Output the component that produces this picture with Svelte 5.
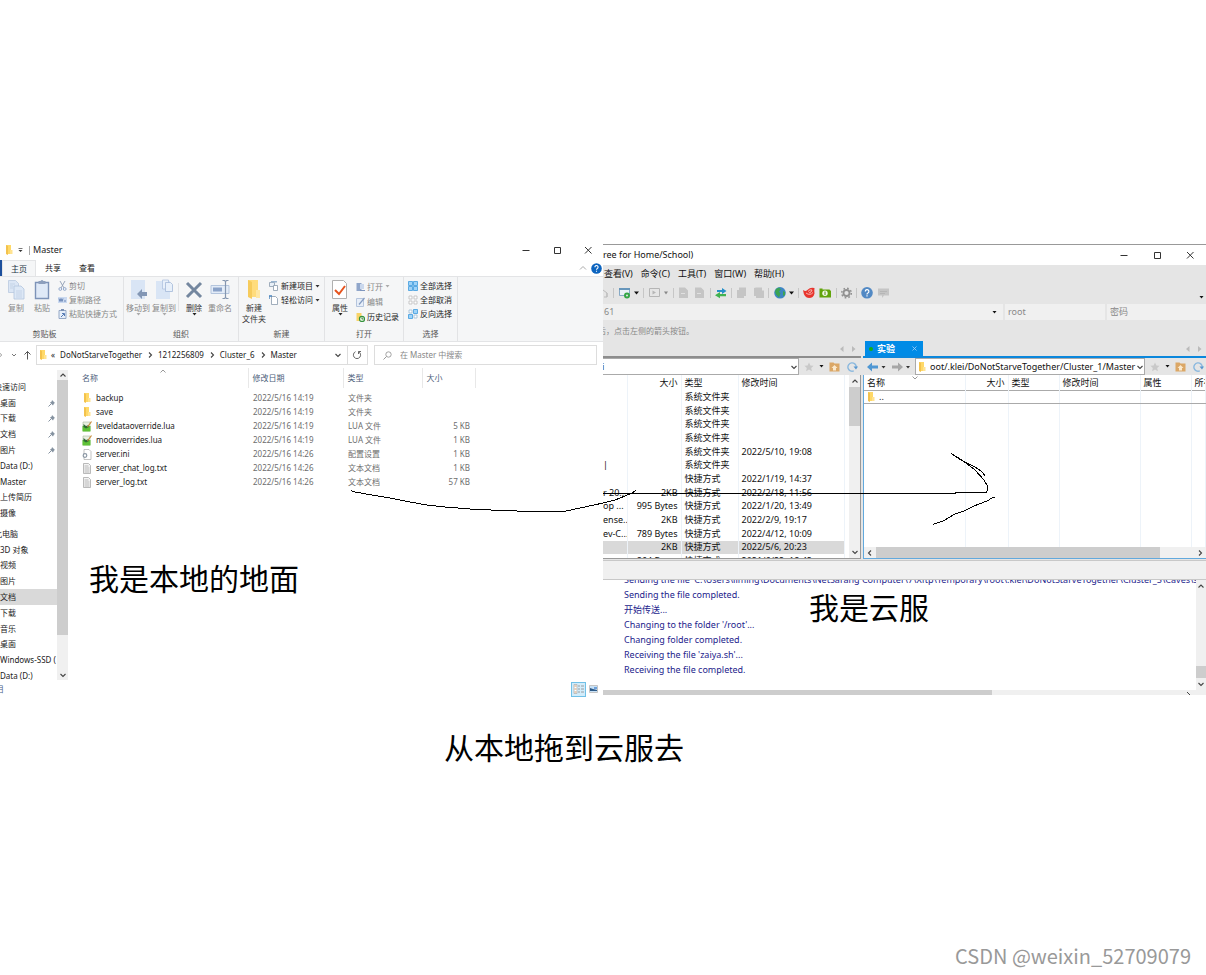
<script>
  const quick = ['快速访问', '桌面', '下载', '文档', '图片', 'Data (D:)', 'Master', '上传简历', '摄像'];
  const pc = ['此电脑', '3D 对象', '视频', '图片', '文档', '下载', '音乐', '桌面', 'Windows-SSD (', 'Data (D:)'];
  const files = [
    ['folder', 'backup', '2022/5/16 14:19', '文件夹', ''],
    ['folder', 'save', '2022/5/16 14:19', '文件夹', ''],
    ['lua', 'leveldataoverride.lua', '2022/5/16 14:19', 'LUA 文件', '5 KB'],
    ['lua', 'modoverrides.lua', '2022/5/16 14:19', 'LUA 文件', '1 KB'],
    ['ini', 'server.ini', '2022/5/16 14:26', '配置设置', '1 KB'],
    ['txt', 'server_chat_log.txt', '2022/5/16 14:26', '文本文档', '1 KB'],
    ['txt', 'server_log.txt', '2022/5/16 14:26', '文本文档', '57 KB']
  ];
  const local = [
    ['', '', '系统文件夹', ''],
    ['', '', '系统文件夹', ''],
    ['', '', '系统文件夹', ''],
    ['', '', '系统文件夹', ''],
    ['', '', '系统文件夹', '2022/5/10, 19:08'],
    ['|', '', '系统文件夹', ''],
    ['', '', '快捷方式', '2022/1/19, 14:37'],
    ['r 20...', '2KB', '快捷方式', '2022/2/18, 11:56'],
    ['op ...', '995 Bytes', '快捷方式', '2022/1/20, 13:49'],
    ['ense...', '2KB', '快捷方式', '2022/2/9, 19:17'],
    ['ev-C...', '789 Bytes', '快捷方式', '2022/4/12, 10:09'],
    ['', '2KB', '快捷方式', '2022/5/6, 20:23'],
    ['', '864 Bytes', '快捷方式', '2021/6/22, 18:42']
  ];
  const log = [
    "Sending the file 'C:\\Users\\liming\\Documents\\NetSarang Computer\\7\\Xftp\\Temporary\\root\\.klei\\DoNotStarveTogether\\Cluster_5\\Caves\\se",
    'Sending the file completed.',
    '开始传送...',
    "Changing to the folder '/root'...",
    'Changing folder completed.',
    "Receiving the file 'zaiya.sh'...",
    'Receiving the file completed.'
  ];
  const crumbs = ['DoNotStarveTogether', '1212256809', 'Cluster_6', 'Master'];
  const menus = ['查看(V)', '命令(C)', '工具(T)', '窗口(W)', '帮助(H)'];
</script>

{#snippet folder()}
  <svg width="8" height="10" viewBox="0 0 8 10"><path d="M1 0h5v9H1z" fill="#ffd968" /><path d="M1 0l2 1v9l-2-1z" fill="#f3c24d" /><path d="M5 5h2.500v4H5z" fill="#ffe391" /></svg>
{/snippet}
{#snippet chev(dir)}
  <svg width="8" height="8" viewBox="0 0 8 8" fill="none" stroke="#444" stroke-width="1.100">
    <path d={dir === 'up' ? 'M1.500 5.500L4 3l2.500 2.500' : dir === 'down' ? 'M1.500 3L4 5.500 6.500 3' : dir === 'left' ? 'M5 1.500L2.500 4 5 6.500' : 'M3 1.500L5.500 4 3 6.500'} />
  </svg>
{/snippet}
{#snippet tri(color)}
  <svg width="5" height="3" viewBox="0 0 5 3"><path d="M.500 0h4L2.500 2.500z" fill={color} /></svg>
{/snippet}
{#snippet fileIcon(kind)}
  {#if kind === 'folder'}
    <svg width="10" height="10" viewBox="-1 0 10 10"><path d="M1 0h5v9H1z" fill="#ffd968" /><path d="M1 0l2 1v9l-2-1z" fill="#f3c24d" /><path d="M5 5h2.500v4H5z" fill="#ffe391" /></svg>
  {:else if kind === 'lua'}
    <svg width="10" height="11" viewBox="0 0 10 11"><path d="M1 1h7v9H1z" fill="#e8efe2" stroke="#aab8a0" stroke-width=".6" /><path d="M.500 5h8v5.500h-8z" fill="#5fc236" /><path d="M1.500 3l2.500 2 3-1v2L4 7.500 1.500 6z" fill="#2d6a35" /><path d="M9.500 .500L5.500 6" stroke="#c78a3c" stroke-width="1.200" /></svg>
  {:else if kind === 'ini'}
    <svg width="10" height="11" viewBox="0 0 10 11"><path d="M2 .500h5l2 2v8H2z" fill="#fff" stroke="#aaa" stroke-width=".7" /><circle cx="3" cy="6.500" r="1.800" fill="#fff" stroke="#8b97a4" stroke-width="1.200" /></svg>
  {:else}
    <svg width="10" height="11" viewBox="0 0 10 11"><path d="M1.500 .500h5l2 2v8h-7z" fill="#f4f4f4" stroke="#aaa" stroke-width=".8" /><path d="M2.500 3h4M2.500 5h5M2.500 7h5M2.500 9h5" stroke="#aaa" stroke-width=".8" /></svg>
  {/if}
{/snippet}
{#snippet winControls(gap)}
  <div class="controls" style:gap="{gap}px">
    <button aria-label="最小化"><svg width="8" height="8" viewBox="0 0 8 8"><path d="M.500 4.500h7" stroke="#333" /></svg></button>
    <button aria-label="最大化"><svg width="8" height="8" viewBox="0 0 8 8"><path d="M1.500 1.500h6v6h-6z" fill="none" stroke="#333" /></svg></button>
    <button aria-label="关闭"><svg width="8" height="8" viewBox="0 0 8 8"><path d="M1 1l6.500 6.500M7.500 1L1 7.500" stroke="#333" /></svg></button>
  </div>
{/snippet}
{#snippet pathTools()}
  <button aria-label="收藏"><svg width="10" height="10" viewBox="0 0 10 10"><path d="M5 .500l1.400 3 3.200.3-2.400 2.200.7 3.200L5 7.600 2.100 9.200l.7-3.200L.400 3.800l3.200-.3z" fill="#c9c9c9" /></svg></button>
  <button aria-label="收藏列表">{@render tri('#111')}</button>
  <button aria-label="上级"><svg width="11" height="10" viewBox="0 0 11 10"><path d="M.500 .500h4l1 1h5v8H.500z" fill="#dba766" /><path d="M5.500 3l3 3H7v2.500H4V6H2.500z" fill="#fbe9cc" /></svg></button>
  <button class="again" aria-label="刷新"><svg width="11" height="10" viewBox="0 0 11 10"><path d="M6.800 8.900A4.200 4.200 0 1 1 9.300 5" fill="none" stroke="#8ab8de" stroke-width="1.400" /><path d="M6.500 4.500H11L9 7.500z" fill="#5796cf" /></svg></button>
{/snippet}

<main>
  <div class="desk">
    <section class="explorer">
      <header class="title">
        {@render folder()}
        <svg class="qat" width="5" height="6" viewBox="0 0 5 6"><path d="M.500 1.500h4" stroke="#555" stroke-width=".8" /><path d="M.500 3h4L2.500 5z" fill="#333" /></svg>
        <span class="bar"></span><span>Master</span>
        {@render winControls(23)}
      </header>
      <nav class="tabs">
        <span class="filetab"></span>
        <button class="on">主页</button><button>共享</button><button>查看</button>
        <span class="grow"></span>
        <svg width="8" height="8" viewBox="0 0 8 8"><path d="M1 5.500l3-3 3 3" fill="none" stroke="#aaa" /></svg>
        <button class="help" aria-label="帮助"><svg width="11" height="11" viewBox="0 0 11 11"><circle cx="5.500" cy="5.500" r="5.300" fill="#0c64bf" /><path d="M3.900 4.200a1.600 1.600 0 1 1 2.500 1.300q-.9.500-.9 1.300M5.500 7.700v1" fill="none" stroke="#fff" stroke-width="1.100" /></svg></button>
      </nav>
      <div class="ribbon">
        <div class="group g1">
          <div class="tools">
            <span class="edge"></span>
            <button class="big dim">
              <svg width="18" height="21" viewBox="0 0 18 21"><path d="M1.500 1.500h7l3 3v9h-10z" fill="#dbe6f5" stroke="#b9c9e0" stroke-width=".8" /><path d="M7 7h7l3 3v10H7z" fill="#dde8f6" stroke="#b3c5de" stroke-width=".8" /><path d="M3 5h5M3 7h3M3 9h3M9 12h6M9 14h6M9 16h6M9 18h6" stroke="#bccce3" stroke-width=".7" /></svg>
              复制</button>
            <button class="big dim">
              <svg width="18" height="21" viewBox="0 0 18 21"><path d="M2.500 3.500h13v16h-13z" fill="#dfe9f7" stroke="#7d93b8" stroke-width="1.400" /><path d="M5.500 2h2q1.500-2 3 0h2v3h-7z" fill="#8d9fbd" /></svg>
              粘贴</button>
            <div class="stack">
              <button class="dim"><svg width="9" height="10" viewBox="0 0 9 10"><path d="M2 0l4 7M7 0L3 7" stroke="#8f9db3" stroke-width=".9" /><circle cx="2.300" cy="8" r="1.400" fill="none" stroke="#8ba3c8" stroke-width=".9" /><circle cx="6.700" cy="8" r="1.400" fill="none" stroke="#8ba3c8" stroke-width=".9" /></svg>剪切</button>
              <button class="dim"><svg width="9" height="6" viewBox="0 0 9 6"><path d="M0 0h9v6H0z" fill="#cbdaf0" /><path d="M1 1.500l1 3 1-3 1 3 1-3M6 4h2" fill="none" stroke="#5674a8" stroke-width=".8" /></svg>复制路径</button>
              <button class="dim"><svg width="9" height="10" viewBox="0 0 9 10"><path d="M1 1.500h7v8H1z" fill="#e6eef9" stroke="#8b9fbf" stroke-width=".9" /><path d="M3 0h3v2H3z" fill="#7b91b5" /><path d="M3 8l3-3M4 4.500h2.500V7" stroke="#456dad" fill="none" stroke-width=".9" /></svg>粘贴快捷方式</button>
            </div>
          </div>
          <footer>剪贴板</footer>
        </div>
        <div class="group g2">
          <div class="tools">
            <button class="big dim"><svg width="20" height="21" viewBox="0 0 20 21"><path d="M3 1h14v19H3z" fill="#d9e5f5" /><path d="M9 15l5-5v3h5v4h-5v3z" fill="#8397b5" /></svg>移动到{@render tri('#aaa')}</button>
            <button class="big dim"><svg width="20" height="21" viewBox="0 0 20 21"><path d="M2 2h14v18H2z" fill="#d9e5f5" /><path d="M8.500 1h6v9h-6z" fill="#e8f0fa" stroke="#b0c3df" stroke-width=".8" /><path d="M11.500 3.500h5l2 2v7h-7z" fill="#e8f0fa" stroke="#a3b9d8" stroke-width=".8" /></svg>复制到{@render tri('#aaa')}</button>
            <span class="sep"></span>
            <button class="big"><svg width="18" height="21" viewBox="0 0 18 21"><path d="M2 4l14 14M16 4L2 18" stroke="#74879f" stroke-width="3" /></svg>删除{@render tri('#222')}</button>
            <button class="big dim"><svg width="20" height="21" viewBox="0 0 20 21"><path d="M1 6.500h18v8H1z" fill="#e3ecf8" stroke="#b4c5dd" /><path d="M3 8.500h9v4H3z" fill="#8aa2c8" /><path d="M12.500 1.500h2l1 1 1-1h2M15.500 2.500v16M12.500 19.500h2l1-1 1 1h2" fill="none" stroke="#8496b0" stroke-width="1.200" /></svg>重命名</button>
          </div>
          <footer>组织</footer>
        </div>
        <div class="group g3">
          <div class="tools">
            <button class="big"><svg width="18" height="21" viewBox="0 0 18 21"><path d="M3 1h10v17H3z" fill="#ffdc7c" /><path d="M3 1l4 2v17l-4-2z" fill="#f6cb5c" /><path d="M11 11h4v8h-4z" fill="#ffe7a4" /></svg>新建<br />文件夹</button>
            <div class="stack">
              <button><svg width="10" height="10" viewBox="0 0 10 10"><path d="M.500 1.500h5v4h-5z" fill="#e8f0f8" stroke="#8a9aac" stroke-width=".8" /><path d="M4.500 4.500h4v5h-4z" fill="#fff" stroke="#8a9aac" stroke-width=".8" /><path d="M2 0h6v1.500H2z" fill="#99b5d0" /></svg>新建项目{@render tri('#333')}</button>
              <button><svg width="10" height="10" viewBox="0 0 10 10"><path d="M2.500 1.500h4l2 2v6h-6z" fill="#fff" stroke="#8a9aac" stroke-width=".8" /><path d="M0 4V1h3" fill="none" stroke="#4883bd" stroke-width="1.400" /></svg>轻松访问{@render tri('#333')}</button>
            </div>
          </div>
          <footer>新建</footer>
        </div>
        <div class="group g4">
          <div class="tools">
            <button class="big"><svg width="18" height="21" viewBox="0 0 18 21"><path d="M1.500 1.500h11l3 3v15h-14z" fill="#fff" stroke="#b0b0b0" /><path d="M4 11l4 4 6-8" fill="none" stroke="#e6531d" stroke-width="2" /></svg>属性{@render tri('#222')}</button>
            <div class="stack loose">
              <button class="dim"><svg width="9" height="10" viewBox="0 0 9 10"><path d="M.500 1h5v8h-5z" fill="#90a6ca" /><path d="M4 2h4v5H4z" fill="#cad8ed" /><path d="M4 8.500h5" stroke="#7e96be" /></svg>打开{@render tri('#aaa')}</button>
              <button class="dim"><svg width="9" height="10" viewBox="0 0 9 10"><path d="M.500 1.500h7v8h-7z" fill="#e7eef8" stroke="#b5c5dd" /><path d="M8.500 1L3 7.500" stroke="#849cc2" stroke-width="1.200" /></svg>编辑</button>
              <button><svg width="9" height="10" viewBox="0 0 9 10"><path d="M.500 1h5v8h-5z" fill="#f8d468" /><circle cx="6" cy="7" r="2.600" fill="#dff1d9" stroke="#35913d" stroke-width="1.100" /><path d="M6 5.500V7h1.500" stroke="#286d30" fill="none" stroke-width=".8" /></svg>历史记录</button>
            </div>
          </div>
          <footer>打开</footer>
        </div>
        <div class="group g5">
          <div class="tools">
            <div class="stack">
              <button><svg width="10" height="10" viewBox="0 0 10 10"><path d="M.500 .500h4v4h-4zM5.500 .500h4v4h-4zM.500 5.500h4v4h-4zM5.500 5.500h4v4h-4z" fill="#9fd3f8" stroke="#3d9add" stroke-width=".8" /></svg>全部选择</button>
              <button><svg width="10" height="10" viewBox="0 0 10 10"><path d="M1 1h3v3H1zM6 1h3v3H6zM1 6h3v3H1zM6 6h3v3H6z" fill="#fff" stroke="#bbb" stroke-width=".8" /></svg>全部取消</button>
              <button><svg width="10" height="10" viewBox="0 0 10 10"><path d="M5.500 .500h4v4h-4zM.500 5.500h4v4h-4z" fill="#9fd3f8" stroke="#3d9add" stroke-width=".8" /><path d="M1 1h3v3H1zM6 6h3v3H6z" fill="#fff" stroke="#9bbad4" stroke-width=".8" /></svg>反向选择</button>
            </div>
          </div>
          <footer>选择</footer>
        </div>
      </div>
      <div class="address">
        <svg width="36" height="10" viewBox="0 0 36 10" fill="none" stroke="#777"><path d="M-1 5h3M0 3l2 2-2 2" stroke="#bbb" /><path d="M12 4l2 2 2-2" /><path d="M27.500 9.500V1.500M24.500 4.500l3-3 3 3" stroke="#555" /></svg>
        <div class="crumbs">
          {@render folder()}<span class="lead">«</span>
          {#each crumbs as c, i}
            {#if i}{@render chev('right')}{/if}<a href="#path">{c}</a>
          {/each}
          <span class="grow"></span>{@render chev('down')}
          <button class="reload" aria-label="刷新"><svg width="10" height="10" viewBox="0 0 10 10"><path d="M6.500 1.700a3.600 3.600 0 1 1-3 0M6.500 4V1.500H9" fill="none" stroke="#666" /></svg></button>
        </div>
        <label class="search">
          <svg width="9" height="9" viewBox="0 0 9 9"><circle cx="5.500" cy="3.500" r="2.700" fill="none" stroke="#999" stroke-width=".9" /><path d="M3.500 5.500L.500 8.500" stroke="#999" /></svg>
          <input aria-label="搜索" placeholder="在 Master 中搜索" />
        </label>
      </div>
      <div class="body">
        <aside>
          <ul class="quick">
            {#each quick as q, i}
              <li class:head={i === 0}>{q}{#if i > 0 && i < 5}<svg width="8" height="8" viewBox="0 0 8 8"><path d="M4 1l3 3-1 .5-1 2-3-3 1.700-1z" fill="#8592a0" /><path d="M3.500 4.500L.500 7.500" stroke="#8592a0" /></svg>{/if}</li>
            {/each}
          </ul>
          <ul class="pc">
            {#each pc as p, i}
              <li class:head={i === 0} class:sel={i === 4}>{p}</li>
            {/each}
          </ul>
        </aside>
        <div class="vbar left">{@render chev('up')}<i></i>{@render chev('down')}</div>
        <div class="files">
          <span class="sort"><svg width="8" height="6" viewBox="0 0 8 6"><path d="M1.500 4.500L4 2l2.500 2.500" fill="none" stroke="#999" /></svg></span>
          <table>
            <colgroup><col class="c1" /><col class="c2" /><col class="c3" /><col class="c4" /><col /></colgroup>
            <thead><tr><th>名称</th><th>修改日期</th><th>类型</th><th>大小</th><th></th></tr></thead>
            <tbody>
              {#each files as f}
                <tr><td><span class="name">{@render fileIcon(f[0])}{f[1]}</span></td><td>{f[2]}</td><td>{f[3]}</td><td class="r">{f[4]}</td><td></td></tr>
              {/each}
            </tbody>
          </table>
        </div>
      </div>
      <footer class="status">
        <span>目</span>
        <button class="view on" aria-label="详细信息"><svg width="12" height="12" viewBox="0 0 12 12"><path d="M1 1.500h3v9H1z" fill="#fff" stroke="#aaa" stroke-width=".7" /><path d="M1.500 3h2M1.500 6h2M1.500 9h2" stroke="#c8864c" stroke-width=".8" /><path d="M5 3h2M8 3h3M5 6h2M8 6h3M5 9h2M8 9h3" stroke="#8b8b8b" stroke-width=".8" /></svg></button>
        <button class="view" aria-label="大图标"><svg width="9" height="8" viewBox="0 0 9 8"><path d="M.500 .500h8v7h-8z" fill="#c9e1f5" stroke="#c5c5c5" /><path d="M1 3l3 1 4 1v1H1z" fill="#2d5a88" /><path d="M5 2h3v2H5z" fill="#6da1dc" /></svg></button>
      </footer>
    </section>

    <section class="xftp">
      <header class="title2"><span>ree for Home/School)</span>{@render winControls(25)}</header>
      <nav class="menu">{#each menus as m}<button>{m}</button>{/each}</nav>
      <div class="toolbar">
        <svg width="300" height="14" viewBox="603 286 300 14">
          <path d="M603 290l4 3v4h-3M607 293v4" fill="none" stroke="#bbb" />
          <g stroke="#c6c6c6"><path d="M613.500 288v10M643.500 288v10M673.500 288v10M710.500 288v10M731.500 288v10M768.500 288v10M798.500 288v10M836.500 288v10M856.500 288v10" /></g>
          <path d="M619.500 288.500h10v7h-10z" fill="#eaf1f6" stroke="#7ba2c0" stroke-width=".9" /><path d="M619 288h11v2h-11z" fill="#6796bb" /><circle cx="627" cy="295.500" r="2" fill="#e5e5e5" stroke="#35a646" stroke-width="2" />
          <path d="M634 291.500h5l-2.500 3z" fill="#111" />
          <path d="M649.500 288.500h10v8h-10z" fill="none" stroke="#b5b5b5" /><path d="M652.500 290.500v4l3.500-2z" fill="#b5b5b5" /><path d="M664 291.500h4l-2 3z" fill="#888" />
          <g fill="#c5c5c5"><path d="M679 287.500h6l3 3v7.500h-9zM695 287.500h6l3 3v7.500h-9zM739 287.500h7v8.500h-2v2h-7v-8h2zM756 287.500h6v3h2v7.500h-8v-2h-2v-8z" /></g><path d="M681 293.500h4M697 293.500h4" stroke="#e0e0e0" />
          <path d="M717 290h5v-2l4.500 3-4.500 3v-2h-5z" fill="#258fca" /><path d="M726 294h-6v-2l-5 3.200 5 3v-2h6z" fill="#42b250" />
          <circle cx="780" cy="292.800" r="5.800" fill="#3d86c4" /><path d="M776 289l3-1.500 2 2-2 2 1.500 2-1.500 4-3-3-1-3zM783 291l2 1v3l-2 1z" fill="#3ba453" />
          <path d="M789 291.500h5l-2.500 3z" fill="#111" />
          <path d="M803 290q3 2 5-.5 2-2.500 6.500-1.500-.5 4 0 5.500-1 4.500-5.500 4.500-5 0-6-8z" fill="#e8352e" /><path d="M806 293q4 3 7-.5M808 291.500q2-2.500 4-1.500-.5 2.500-3 3" fill="none" stroke="#f8d0cc" stroke-width=".8" />
          <path d="M819.500 288.500h3v1h7l1.500 1.500v6.500h-11.500z" fill="#62a40b" /><circle cx="825" cy="293.300" r="2.700" fill="#f2f8e8" /><path d="M825 291.500v3.500" stroke="#538b0a" />
          <circle cx="846.500" cy="293" r="3" fill="none" stroke="#919191" stroke-width="1.800" /><circle cx="846.500" cy="293" r="4.800" fill="none" stroke="#919191" stroke-width="1.500" stroke-dasharray="1.700 2.070" />
          <circle cx="867" cy="292.800" r="5.800" fill="#5289c4" /><path d="M865.300 291.500a1.800 1.800 0 1 1 2.600 1.500q-.9.400-.9 1.400M867 295.200v1.200" fill="none" stroke="#fff" stroke-width="1.200" />
          <path d="M878 288.500h11v7h-5l-2 2.500v-2.500h-4z" fill="#c5c5c5" /><path d="M880 291.500h7M880 293.500h5" stroke="#b2b2b2" stroke-width=".8" />
        </svg>
        <span class="more">{@render tri('#111')}</span>
      </div>
      <div class="login">
        <label class="host"><input aria-label="主机" value="61" />{@render tri('#111')}</label>
        <input class="user" aria-label="用户" placeholder="root" />
        <input class="pass" aria-label="密码" placeholder="密码" />
      </div>
      <p class="hint">后，点击左侧的箭头按钮。</p>
      <div class="panes">
        <div class="pane local">
          <div class="ptabs"><span class="grow"></span><svg width="18" height="8" viewBox="0 0 18 8" fill="#bbb"><path d="M4.500 1v6L1 4zM13 1v6l3.500-3z" /></svg></div>
          <div class="ppath"><div class="field"><span class="cut">i</span>{@render chev('down')}</div>{@render pathTools()}</div>
          <div class="plist">
            <table>
              <colgroup><col class="l1" /><col class="l2" /><col class="l3" /><col /></colgroup>
              <thead><tr><th></th><th class="r">大小</th><th>类型</th><th>修改时间</th></tr></thead>
              <tbody>
                {#each local as r, i}
                  <tr class:sel={i === 11}><td>{r[0]}</td><td class="r">{r[1]}</td><td>{r[2]}</td><td>{r[3]}</td></tr>
                {/each}
              </tbody>
            </table>
            <div class="vbar right">{@render chev('up')}<i></i>{@render chev('down')}</div>
          </div>
        </div>
        <div class="pane remote">
          <div class="ptabs">
            <button class="tab"><i></i>实验<svg width="5" height="5" viewBox="0 0 5 5"><path d="M.500 .500l4 4M4.500 .500l-4 4" stroke="#a9d3f6" stroke-width=".8" /></svg></button>
            <span class="grow"></span><svg width="18" height="8" viewBox="0 0 18 8" fill="#bbb"><path d="M4.500 1v6L1 4zM13 1v6l3.500-3z" /></svg>
          </div>
          <div class="ppath">
            <svg width="46" height="10" viewBox="-2 0 46 10"><path d="M1 5l5-4.500v3h6v3H6v3z" fill="#4f97d3" /><path d="M15.500 4h4l-2 2.500zM40 4h4l-2 2.500z" fill="#333" /><path d="M37 5l-5-4.500v3h-6v3h6v3z" fill="#a6a6a6" /></svg>
            <div class="field">{@render folder()}<span class="url">oot/.klei/DoNotStarveTogether/Cluster_1/Master</span>{@render chev('down')}</div>
            {@render pathTools()}
          </div>
          <div class="rlist">
            <span class="sort2"><svg width="8" height="6" viewBox="0 0 8 6"><path d="M1.500 1.500L4 4l2.500-2.500" fill="none" stroke="#999" /></svg></span>
            <table>
              <colgroup><col class="r1" /><col class="r2" /><col class="r3" /><col class="r4" /><col class="r5" /><col /></colgroup>
              <thead><tr><th>名称</th><th class="r">大小</th><th>类型</th><th>修改时间</th><th>属性</th><th>所有</th></tr></thead>
              <tbody>
                <tr class="up"><td><span class="name">{@render folder()}..</span></td><td></td><td></td><td></td><td></td><td></td></tr>
                <tr><td></td><td></td><td></td><td></td><td></td><td></td></tr>
              </tbody>
            </table>
          </div>
          <div class="hbar">{@render chev('left')}<i></i><span class="grow"></span>{@render chev('right')}</div>
        </div>
      </div>
      <div class="strip"></div>
      <div class="logs">
        <div class="lines"><div class="rows">{#each log as l}<p>{l}</p>{/each}</div></div>
        <div class="vbar end">{@render chev('up')}<i></i>{@render chev('down')}</div>
      </div>
      <div class="hscroll"><i></i><svg width="6" height="5" viewBox="0 0 6 5"><path d="M1 2l3 3" stroke="#444" /></svg></div>
    </section>
  </div>

  <svg class="ink" viewBox="0 0 1206 975" preserveAspectRatio="none" fill="none" stroke="#000" stroke-width="1" shape-rendering="crispEdges">
    <path d="M351 490.500L355 492 372 495 390 498 410 502 427 505 445 507 470 509 491 510 530 511.500H564L580 508 594 505 603 503 615 500 625 496 632 493 636 490.500" />
    <path d="M603 493.500H955V492.500H986L987.500 490V486L984 480 975 470 962 460 951 453.500 961 460 975 467 981 471 985 475.500" />
    <path d="M933 524.500L943 521 955 514 964 511 974 506 987 501 992 498 995.500 497.500" />
  </svg>
  <p class="note n1">我是本地的地面</p>
  <p class="note n2">我是云服</p>
  <p class="note n3">从本地拖到云服去</p>
  <p class="mark">CSDN @weixin_52709079</p>
</main>

<style>
  :global(body) { margin: 0; background: #fff; }
  main { position: relative; min-height: 975px; overflow: hidden; box-sizing: border-box; padding-top: 240px; color: #222; font: 8px/12px "Noto Sans", "Noto Sans CJK SC", sans-serif; }
  main :is(p, ul) { margin: 0; padding: 0; list-style: none; }
  button, input { font: inherit; color: inherit; background: none; border: 0; padding: 0; margin: 0; min-width: 0; outline: 0; }
  button { display: flex; align-items: center; white-space: nowrap; }
  a { color: inherit; text-decoration: none; }
  svg { display: block; flex: none; }
  .grow { flex: 1; }
  .r { text-align: right !important; }
  table { border-collapse: collapse; table-layout: fixed; width: 100%; }
  th, td { padding: 0; text-align: left; font-weight: 400; white-space: nowrap; overflow: hidden; }
  .desk { display: grid; grid-template-columns: 1fr 1fr; align-items: start; }
  section { min-width: 0; overflow: hidden; }

  .title { display: flex; align-items: center; height: 20px; padding-left: 5px; padding-right: 11px; }
  .title span { font-size: 9px; }
  .qat { margin-left: 5px; }
  .bar { width: 1px; height: 9px; background: #aaa; margin: 0 3px 0 6px; }
  .controls { display: flex; margin-left: auto; }
  .tabs { display: flex; align-items: center; height: 16px; }
  .filetab { width: 2px; align-self: stretch; background: #1c4f9c; }
  .tabs button { height: 16px; width: 34px; justify-content: center; }
  .tabs .on { background: #f5f6f7; border: 1px solid #e3e4e6; border-bottom: 0; color: #234; box-sizing: border-box; }
  .tabs button.help { width: 13px; margin-left: 3px; }
  .ribbon { display: flex; height: 64px; background: #f5f6f7; border: solid #e3e4e6; border-width: 1px 0; }
  .group { display: flex; flex-direction: column; box-sizing: border-box; border-right: 1px solid #e2e3e5; }
  .g1 { width: 124px; } .g2 { width: 115px; } .g3 { width: 86px; } .g4 { width: 79px; } .g5 { width: 54px; }
  .group footer { text-align: center; line-height: 14px; color: #555; padding-right: 34px; }
  .g2 footer, .g3 footer, .g4 footer, .g5 footer { padding: 0; }
  .tools { flex: 1; display: flex; align-items: flex-start; padding-top: 2px; }
  .edge { width: 3px; }
  .big { flex-direction: column; width: 26px; line-height: 11px; text-align: center; color: #333; }
  .big svg { margin-bottom: 2px; }
  .dim { color: #888; }
  .g3 .big, .g4 .big { width: 30px; }
  .stack { display: flex; flex-direction: column; padding-left: 3px; }
  .g3 .stack { padding-left: 0; } .g4 .stack { padding-left: 1px; } .g5 .stack { padding-left: 4px; }
  .stack button { height: 14px; gap: 2px; }
  .stack.loose button { height: 15px; }
  .sep { width: 1px; height: 28px; background: #e2e3e5; margin: 4px 2px 4px 1px; }
  .g2 .tools { padding-left: 1px; }
  .address { display: flex; align-items: center; height: 26px; padding-right: 6px; }
  .crumbs { display: flex; align-items: center; flex: 340; height: 20px; box-sizing: border-box; border: 1px solid #ddd; padding-left: 2px; }
  .crumbs a { margin: 0 4px; }
  .lead { margin: 0 1px 0 4px; }
  .reload { width: 20px; height: 18px; justify-content: center; border-left: 1px solid #ddd; margin-left: 5px; }
  .search { display: flex; align-items: center; gap: 8px; flex: 221; height: 20px; box-sizing: border-box; border: 1px solid #ddd; margin-left: 6px; padding-left: 8px; }
  .search input { flex: 1; }
  .search input::placeholder, .login input::placeholder { color: #888; opacity: 1; }
  .body { display: flex; height: 313px; }
  aside { width: 57px; overflow: hidden; padding-top: 11px; box-sizing: border-box; }
  aside ul { display: grid; grid-auto-rows: 1fr; }
  .quick { height: 142px; }
  .pc { height: 158px; margin-top: 5px !important; }
  aside li { display: flex; align-items: center; justify-content: space-between; white-space: nowrap; padding-right: 1px; }
  aside li.head { text-indent: -6px; }
  aside li.sel { background: #d9d9d9; }
  .vbar { display: flex; flex-direction: column; align-items: center; background: #f0f0f0; flex: none; }
  .vbar i { width: 100%; background: #cdcdcd; }
  .vbar.left { width: 11px; margin: 2px 0 1px; padding: 1px 0; justify-content: space-between; }
  .vbar.left i { flex: 0 0 255px; margin-bottom: auto; margin-top: 1px; }
  .files { position: relative; flex: 1; min-width: 0; color: #6d6d6d; }
  .files table { margin-left: 14px; width: calc(100% - 14px); }
  .c1 { width: 166px; } .c2 { width: 95px; } .c3 { width: 79px; } .c4 { width: 53px; }
  .files th { height: 20px; color: #4c607a; }
  .files th + th { border-left: 1px solid #e8e8e8; padding-left: 4px; }
  .files tbody td { height: 14px; line-height: 14px; }
  .files tbody td:nth-child(n + 2) { padding-left: 5px; }
  .files tbody tr:first-child td { padding-top: 3px; }
  .files .r { padding-right: 5px; }
  .sort { position: absolute; left: 91px; top: 0; }
  .name { display: flex; align-items: center; gap: 4px; color: #222; }
  .status { display: flex; align-items: center; height: 16px; color: #47618a; }
  .status span { margin-left: -4px; margin-right: auto; }
  .view { width: 13px; height: 14px; justify-content: center; margin-right: 3px; }
  .view.on { width: 15px; height: 15px; box-sizing: border-box; background: #d2ecfa; border: 1px solid #70c0e7; margin-right: 1px; }

  .xftp { display: flex; flex-direction: column; margin-top: 4px; border-top: 1px solid #999; background: #e5e5e5; font-size: 9px; color: #111; }
  .title2 { display: flex; align-items: center; height: 20px; background: #fff; padding-right: 12px; }
  .menu { display: flex; gap: 8px; height: 18px; padding-left: 1px; }
  .toolbar { display: flex; align-items: flex-start; justify-content: space-between; height: 21px; box-sizing: border-box; padding-top: 3px; }
  .more { padding: 10px 2px 0 0; }
  .login { display: flex; height: 16px; color: #888; margin-bottom: 1px; gap: 2px; }
  .login > * { background: #f0f0f0; box-sizing: border-box; }
  .host { flex: 394; display: flex; align-items: center; padding-right: 6px; }
  .host input { flex: 1; padding-left: 1px; }
  .user { flex: 97; width: 0; padding-left: 3px; } .pass { flex: 96; width: 0; padding-left: 3px; }
  .hint { color: #888; height: 20px; line-height: 20px; margin-left: -5px !important; font-size: 8px; }
  .panes { display: grid; grid-template-columns: 258fr 343fr; gap: 2px; }
  .pane { min-width: 0; display: flex; flex-direction: column; height: 218px; }
  .ptabs { display: flex; align-items: center; flex: 0 0 15px; padding-right: 4px; border-bottom: 2px solid #8d8d8d; }
  .remote .ptabs { border-color: #0b87dc; padding-right: 3px; }
  .tab { align-self: stretch; background: #008be6; color: #fff; font-weight: 600; width: 58px; margin-left: 2px; }
  .tab i { width: 4px; height: 4px; border-radius: 4px; background: #12b012; margin: 0 4px 0 4px; }
  .tab svg { margin-left: auto; margin-right: 6px; }
  .ppath { display: flex; align-items: center; flex: 0 0 17px; gap: 5px; }
  .again { margin-left: 2px; }
  .field { display: flex; align-items: center; align-self: stretch; flex: 1; background: #fff; border: 1px solid #aaa; border-left: 0; min-width: 0; box-sizing: border-box; }
  .cut { flex: 1; color: #345; margin-left: -1px; }
  .local .ppath { padding-right: 3px; }
  .remote .ppath { padding-left: 1px; padding-right: 2px; }
  .remote .field { border-left: 1px solid #aaa; padding-left: 2px; }
  .url { flex: 1; margin-left: 4px; overflow: hidden; white-space: nowrap; }
  .plist { display: flex; flex: 1; min-height: 0; overflow: hidden; background: #fff; border-bottom: 1px solid #999; border-right: 1px solid #999; }
  .plist table { flex: 1; height: 193px; margin-right: 4px; }
  .l1 { width: 24px; } .l2 { width: 54px; } .l3 { width: 57px; }
  .plist th { height: 15px; }
  .plist td { line-height: 12px; }
  .plist :is(th, td) { border-right: 1px solid #edf3f9; padding-left: 3px; }
  .plist :is(th, td):first-child, .plist .r { padding-left: 0; }
  .plist .r { padding-right: 3px; }
  .plist .sel { background: #d9d9d9; }
  .vbar.right { width: 11px; padding: 2px 0; justify-content: space-between; }
  .vbar.right i { flex: 0 0 39px; margin-bottom: auto; margin-top: 2px; }
  .remote .rlist, .remote .hbar { border-left: 1px solid #62a9dd; }
  .rlist { position: relative; flex: 1; min-height: 0; background: #fff; display: flex; }
  .rlist table { height: 100%; }
  .r1 { width: 101px; } .r2 { width: 43px; } .r3 { width: 51px; } .r4 { width: 81px; } .r5 { width: 51px; }
  .rlist th { height: 15px; }
  .rlist :is(th, td) { border-right: 1px solid #edf3f9; padding-left: 3px; }
  .rlist .r { padding-right: 3px; }
  .rlist .up td { height: 11px; border-top: 1px solid #aaa; border-bottom: 1px solid #aaa; }
  .sort2 { position: absolute; left: 47px; top: 0; }
  .hbar { display: flex; align-items: center; height: 11px; background: #f0f0f0; border-bottom: 1px solid #62a9dd; padding: 0 2px; }
  .hbar i { height: 11px; flex: 0 0 84%; background: #cdcdcd; margin-left: 2px; }
  .strip { height: 18px; background: #f0f0f0; border: solid #c8c8c8; border-width: 1px 0; margin-top: 1px; }
  .logs { display: flex; height: 110px; background: #fff; }
  .lines { flex: 1; min-width: 0; overflow: hidden; padding-left: 21px; color: #1c1c8c; }
  .rows { display: grid; grid-auto-rows: 1fr; height: 104px; margin-top: -8px; }
  .lines p { line-height: 15px; white-space: nowrap; }
  .vbar.end { width: 10px; justify-content: space-between; padding: 2px 0; }
  .vbar.end i { flex: 0 0 12px; margin-top: auto; margin-bottom: 2px; }
  .hscroll { display: flex; height: 5px; background: #f0f0f0; padding-right: 14px; }
  .hscroll i { width: 66%; height: 5px; background: #cdcdcd; margin-right: auto; }

  .ink { position: absolute; left: 0; top: 0; width: 100%; height: 975px; pointer-events: none; }
  .note { position: absolute; font: 400 30px/36px "Noto Sans CJK SC", sans-serif; color: #000; white-space: nowrap; }
  .n1 { left: 89px; top: 559px; } .n2 { left: 809px; top: 588px; } .n3 { left: 444px; top: 728px; }
  .mark { position: absolute; right: 15px; bottom: 7px; font: 20px/24px "Noto Sans CJK SC", sans-serif; color: #999; }
</style>
